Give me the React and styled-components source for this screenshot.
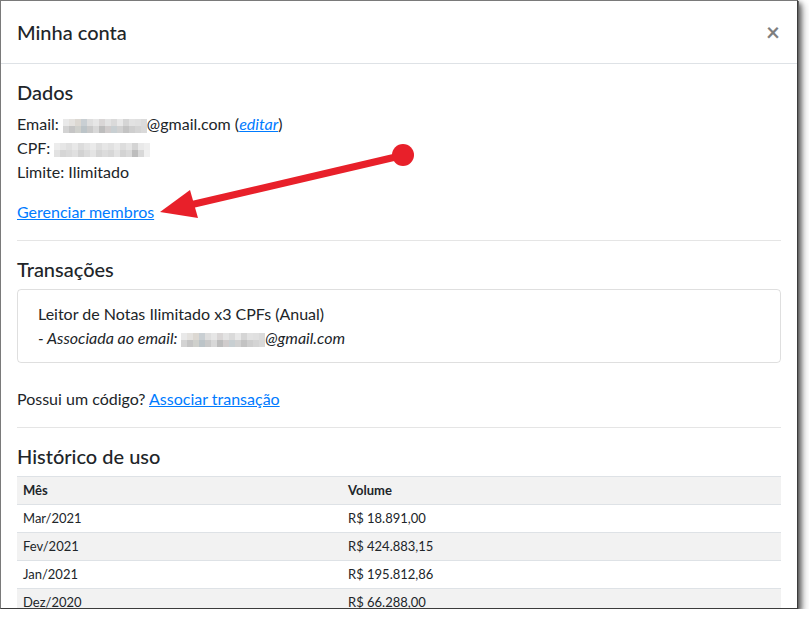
import styled, { createGlobalStyle } from "styled-components";

const GlobalStyle = createGlobalStyle`
	body {
		margin: 0;
		background: #fff;
		font-family: "Segoe UI", Lato, "Noto Sans", sans-serif;
		color: #212529;
	}
`;

const history = [
	{ month: "Mar/2021", volume: "R$ 18.891,00" },
	{ month: "Fev/2021", volume: "R$ 424.883,15" },
	{ month: "Jan/2021", volume: "R$ 195.812,86" },
	{ month: "Dez/2020", volume: "R$ 66.288,00" },
];

const emailBlocks = [
	["#e9e9e9", "#e4e2df", "#dcd8d2", "#c9cfd3", "#dedede", "#e6e6e6", "#d9d6d6", "#e3e3e3", "#dadada", "#e8e8e8", "#d5d5d5", "#e2e2e2", "#e0e0e0", "#dbdbdb"],
	["#d3d3d3", "#c5c5c5", "#cfd0cc", "#bcc4c8", "#c9c9c9", "#d8d8d8", "#bdbdbd", "#d0cccc", "#c8cfd2", "#d1d1d1", "#c3c3c3", "#cecece", "#d4d4d4", "#d9d9d9"],
];

const cpfBlocks = [
	["#ececec", "#e6e6e6", "#e0e0e0", "#e8e8e8", "#dcdcdc", "#e4e4e4", "#eaeaea", "#dedede", "#e6e6e6", "#e1e1e1", "#e9e9e9", "#dddddd", "#e5e5e5", "#d4d4d4", "#e9e9e9", "#eeeeee"],
	["#e2e2e2", "#d6d6d6", "#dadada", "#e0e0e0", "#d2d2d2", "#dbdbdb", "#e4e4e4", "#d5d5d5", "#dcdcdc", "#d7d7d7", "#e3e3e3", "#d3d3d3", "#dadada", "#bdbdbd", "#d8d8d8", "#f0f0f0"],
];

const Pixelated = ({ rows, size = 6 }) => (
	<Mosaic>
		{rows.map((row, i) => (
			<MosaicRow key={i}>
				{row.map((c, j) => (
					<Block key={j} $c={c} $size={size} />
				))}
			</MosaicRow>
		))}
	</Mosaic>
);

const Arrow = () => (
	<Overlay width="809" height="620" viewBox="0 0 809 620">
		<line x1="400" y1="156" x2="190" y2="205" stroke="#e8202a" strokeWidth="7" />
		<polygon points="160,212 190,190 198,218" fill="#e8202a" />
		<circle cx="403" cy="155" r="11" fill="#e8202a" />
	</Overlay>
);

const App = () => {
	return (
		<>
			<GlobalStyle />
			<Frame>
				<Header>
					<Title>Minha conta</Title>
					<Close aria-label="Fechar">×</Close>
				</Header>
				<Body>
					<SectionTitle>Dados</SectionTitle>
					<Line>
						Email: <Pixelated rows={emailBlocks} />@gmail.com (<Link $italic>editar</Link>)
					</Line>
					<Line>
						CPF: <Pixelated rows={cpfBlocks} />
					</Line>
					<Line>Limite: Ilimitado</Line>
					<Para>
						<Link>Gerenciar membros</Link>
					</Para>
					<Divider />

					<SectionTitle>Transações</SectionTitle>
					<Card>
						<Line>Leitor de Notas Ilimitado x3 CPFs (Anual)</Line>
						<Line>
							<em>- Associada ao email: </em>
							<Pixelated rows={emailBlocks} />
							<em>@gmail.com</em>
						</Line>
					</Card>
					<Line>
						Possui um código? <Link>Associar transação</Link>
					</Line>
					<Divider />

					<SectionTitle>Histórico de uso</SectionTitle>
					<Table>
						<thead>
							<Row $shaded>
								<Th $w={313}>Mês</Th>
								<Th>Volume</Th>
							</Row>
						</thead>
						<tbody>
							{history.map((h, i) => (
								<Row key={h.month} $shaded={i % 2 === 1}>
									<Td>{h.month}</Td>
									<Td>{h.volume}</Td>
								</Row>
							))}
						</tbody>
					</Table>
				</Body>
				<Arrow />
			</Frame>
		</>
	);
};

export default App;

const Frame = styled.div`
	position: relative;
	width: 796px;
	height: 607px;
	overflow: hidden;
	background: #fff;
	border-top: 1px solid #7a7a7a;
	border-left: 1px solid #7a7a7a;
	border-right: 1px solid #3c3c3c;
	border-bottom: 1px solid #3c3c3c;
	box-shadow: 1px 1px 0 #666, 3px 3px 5px rgba(0, 0, 0, 0.55), 5px 5px 8px rgba(0, 0, 0, 0.25);
`;

const Header = styled.div`
	display: flex;
	align-items: center;
	justify-content: space-between;
	padding: 16px;
	border-bottom: 1px solid #dee2e6;
`;

const Title = styled.h5`
	margin: 0;
	font-size: 20px;
	font-weight: 500;
	line-height: 30px;
`;

const Close = styled.button`
	padding: 0 1px 0 0;
	border: 0;
	background: none;
	font-family: inherit;
	font-size: 24px;
	font-weight: 700;
	line-height: 1;
	color: #000;
	opacity: 0.5;
`;

const Body = styled.div`
	padding: 16px;
	font-size: 16px;
`;

const SectionTitle = styled.h5`
	margin: 0 0 8px;
	font-size: 20px;
	font-weight: 500;
	line-height: 24px;
`;

const Line = styled.div`
	height: 24px;
	line-height: 24px;
`;

const Para = styled.p`
	margin: 16px 0;
	line-height: 24px;
`;

const Link = styled.a`
	color: #007bff;
	text-decoration: underline;
	font-style: ${({ $italic }) => ($italic ? "italic" : "normal")};
	cursor: pointer;
`;

const Divider = styled.hr`
	margin: 16px 0;
	border: 0;
	border-top: 1px solid rgba(0, 0, 0, 0.1);
`;

const Card = styled.div`
	margin-bottom: 24px;
	padding: 12px 20px;
	border: 1px solid rgba(0, 0, 0, 0.125);
	border-radius: 4px;
`;

const Mosaic = styled.span`
	display: inline-block;
	overflow: hidden;
	height: 14px;
	line-height: 0;
	vertical-align: -3px;
`;

const MosaicRow = styled.span`
	display: flex;
`;

const Block = styled.span`
	width: ${({ $size }) => $size}px;
	height: 7px;
	background: ${({ $c }) => $c};
`;

const Table = styled.table`
	width: 100%;
	table-layout: fixed;
	border-collapse: collapse;
	font-size: 13px;
	line-height: 19px;
`;

const Row = styled.tr`
	background: ${({ $shaded }) => ($shaded ? "#f2f2f2" : "#fff")};
`;

const Th = styled.th`
	width: ${({ $w }) => ($w ? `${$w}px` : "auto")};
	padding: 4px 6px;
	border-top: 1px solid #dee2e6;
	text-align: left;
	font-weight: 700;
`;

const Td = styled.td`
	padding: 4px 6px;
	border-top: 1px solid #dee2e6;
`;

const Overlay = styled.svg`
	position: absolute;
	top: -1px;
	left: -1px;
	pointer-events: none;
`;
